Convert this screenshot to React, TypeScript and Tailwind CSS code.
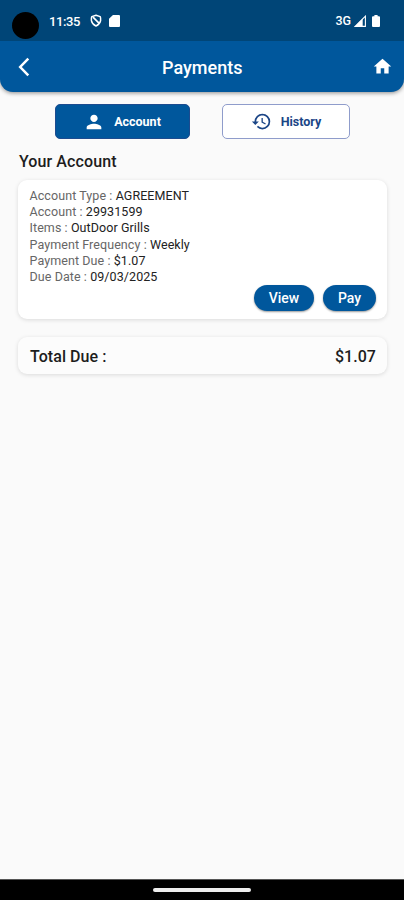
import { MdHistory, MdHome, MdPerson } from 'react-icons/md'

const details = [
    { label: 'Account Type', value: 'AGREEMENT' },
    { label: 'Account', value: '29931599' },
    { label: 'Items', value: 'OutDoor Grills' },
    { label: 'Payment Frequency', value: 'Weekly' },
    { label: 'Payment Due', value: '$1.07' },
    { label: 'Due Date', value: '09/03/2025' },
]

function StatusBar() {
    return (
        <div className="flex h-[41px] shrink-0 items-start bg-[#004577] pr-[24px] pl-[12px] text-white">
            <span className="mt-3 size-[27px] rounded-full bg-black" />
            <span className="mt-[12px] ml-[10px] w-[32px] text-[13px] leading-5 font-medium tracking-[-0.4px] whitespace-nowrap">11:35</span>
            <svg viewBox="0 0 12 13" className="mt-[14px] ml-[8.5px] h-[13px] w-3" fill="none" stroke="currentColor">
                <path d="M6 1.2 10.2 2.6Q10.9 4.4 10.6 6.6C10.1 9 8.4 11 6 12 3.6 11 1.9 9 1.4 6.6Q1.1 4.4 1.8 2.6Z" strokeWidth="1.5" strokeLinejoin="round" />
                <path d="M3 3.2 9.2 9.4" strokeWidth="1.7" />
            </svg>
            <svg viewBox="0 0 10 12" className="mt-[15px] ml-[7.5px] h-3 w-[11px]" fill="currentColor" preserveAspectRatio="none">
                <path d="M3.6 0H9a1 1 0 0 1 1 1v10a1 1 0 0 1-1 1H1a1 1 0 0 1-1-1V3.7Z" />
            </svg>
            <span className="mt-[11px] ml-auto text-[12.5px] leading-5 font-medium">3G</span>
            <svg viewBox="0 0 12 12" className="mt-[15px] ml-[3px] size-3">
                <path d="M11.4 1.2V11.4H1.2Z" fill="none" stroke="currentColor" strokeWidth="1.1" />
                <path d="M8.7 3.5V12H0.5Z" fill="currentColor" />
            </svg>
            <svg viewBox="0 0 8 12" className="mt-[15px] ml-[6px] h-3 w-2" fill="currentColor">
                <path d="M2.4 0h3.2v1.2H7a1 1 0 0 1 1 1V11a1 1 0 0 1-1 1H1a1 1 0 0 1-1-1V2.2a1 1 0 0 1 1-1h1.4Z" />
            </svg>
        </div>
    )
}

function Header() {
    return (
        <header className="rounded-b-[13px] bg-[#00579c] shadow-[0_1px_4px_rgba(0,0,0,0.45)]">
            <StatusBar />
            <div className="flex h-[51px] items-center justify-between pr-[10.5px] pl-[18px] text-white">
                <svg viewBox="0 0 12 20" className="h-5 w-3" fill="none" stroke="currentColor" strokeWidth="2.5">
                    <path d="M10.3 1.7 2.2 10l8.1 8.3" />
                </svg>
                <h1 className="relative top-px left-px text-[18px] leading-6 font-medium">Payments</h1>
                <MdHome size={21} />
            </div>
        </header>
    )
}

export default function App() {
    return (
        <div className="flex h-[900px] w-[404px] flex-col bg-[#fafafa] font-['Roboto',sans-serif] text-[#1d1d1d]">
            <Header />

            <main className="flex-1">
                {/* Tabs */}
                <div className="mt-3 flex gap-8 pl-[55px]">
                    <button className="flex h-[35px] w-[135px] items-center justify-center gap-[9px] rounded-[5px] border border-[#1c4b8f] bg-[#00579c] pr-px text-[12.5px] font-bold text-white">
                        <MdPerson size={22} />
                        <span className="pt-px">Account</span>
                    </button>
                    <button className="flex h-[35px] w-[128px] items-center justify-center gap-[9px] rounded-[5px] border border-[#8f9ccb] bg-white text-[12.5px] font-bold text-[#1b4586]">
                        <MdHistory size={21} />
                        <span className="pt-px">History</span>
                    </button>
                </div>

                <h2 className="mt-[13px] ml-[19px] text-[16px] leading-5 font-medium tracking-[0.1px]">Your Account</h2>

                {/* Account card */}
                <section className="mr-[17px] ml-[18px] mt-2 flex h-[139px] flex-col justify-between rounded-[9px] bg-white pt-2 pr-[11px] pb-2 pl-[11.5px] shadow-[0_1px_4px_rgba(0,0,0,0.13)]">
                    <div className="text-[12.5px] leading-[16.2px] tracking-[0.08px]">
                        {details.map(item => (
                            <p key={item.label} className="text-[#666]">
                                {item.label} : <span className="text-[#222]">{item.value}</span>
                            </p>
                        ))}
                    </div>
                    <div className="-mt-2 flex justify-end gap-[9px] text-[14px] font-medium text-white">
                        <button className="h-[26px] w-[60px] rounded-full bg-[#00579c] shadow-[0_1px_2px_rgba(0,0,0,0.4)]">View</button>
                        <button className="h-[26px] w-[53px] rounded-full bg-[#00579c] shadow-[0_1px_2px_rgba(0,0,0,0.4)]">Pay</button>
                    </div>
                </section>

                {/* Total */}
                <section className="mr-[17px] ml-[18px] mt-[18px] flex h-[37px] items-center justify-between rounded-[9px] bg-[#fcfcfc] pt-[2px] pr-[11px] pl-3 text-[16px] font-medium tracking-[0.05px] shadow-[0_1px_4px_rgba(0,0,0,0.13)]">
                    <span>Total Due :</span>
                    <span>$1.07</span>
                </section>
            </main>

            <footer className="flex h-[21px] items-center justify-center border-t border-[#555] bg-black">
                <span className="h-1 w-[98px] rounded-full bg-[#eee]" />
            </footer>
        </div>
    )
}
